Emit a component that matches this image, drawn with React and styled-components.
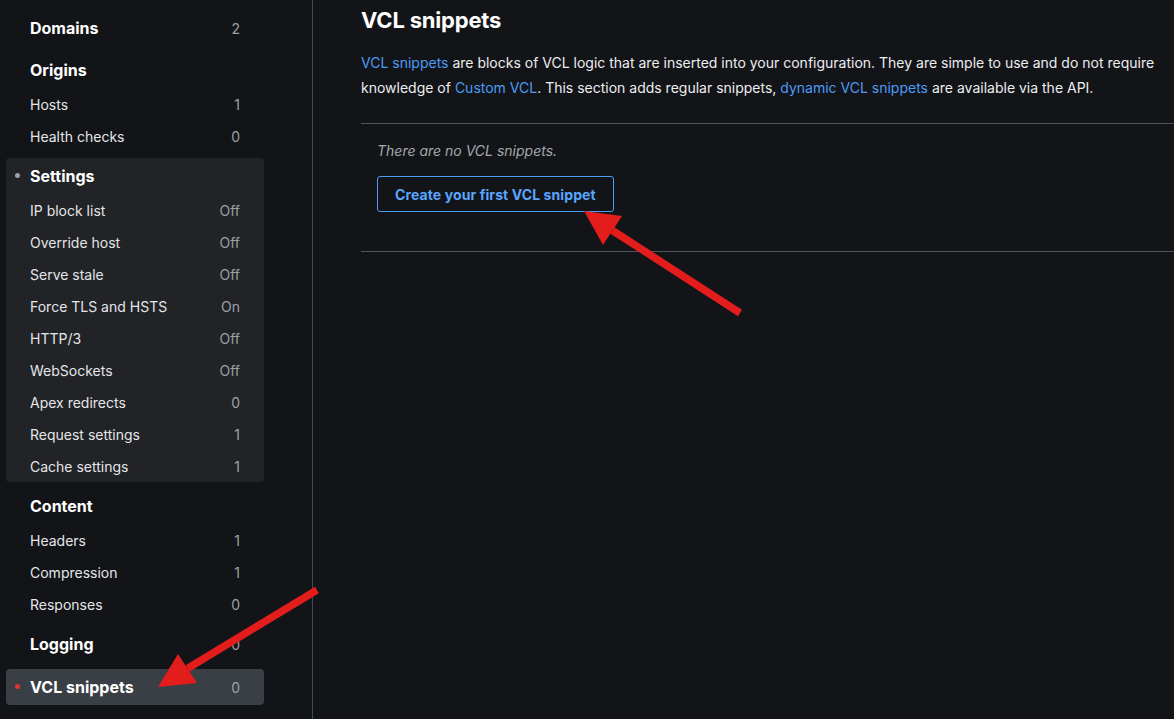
import React from "react";
import styled, { createGlobalStyle } from "styled-components";

const Global = createGlobalStyle`
  html, body { margin: 0; padding: 0; background: #131418; }
  body { font-family: Inter, "Noto Sans", sans-serif; color: #e6e8eb; -webkit-font-smoothing: antialiased; }
  * { box-sizing: border-box; }
`;

const Page = styled.div`
  position: relative;
  display: flex;
  width: 1174px;
  height: 719px;
  overflow: hidden;
  background: #131418;
`;

const Sidebar = styled.nav`
  width: 313px;
  flex: none;
  padding: 10px 48px 0 6px;
  border-right: 1px solid #454a52;
  display: flex;
  flex-direction: column;
  gap: 6px;
`;

const Group = styled.div`
  display: flex;
  flex-direction: column;
  border-radius: 4px;
  margin-top: ${(p) => (p.$active ? "1px" : "0")};
  background: ${(p) => (p.$active ? "#3a3f46" : p.$panel ? "#212327" : "transparent")};
`;

const Row = styled.div`
  position: relative;
  display: flex;
  align-items: center;
  justify-content: space-between;
  height: ${(p) => (p.$header ? "36px" : "32px")};
  padding: 0 24px;
  font-size: ${(p) => (p.$header ? "16px" : "14px")};
  font-weight: ${(p) => (p.$header ? 700 : 400)};
  color: ${(p) => (p.$header ? "#ffffff" : "#e4e6e9")};
`;

const Dot = styled.span`
  position: absolute;
  left: 9px;
  top: 50%;
  width: 5px;
  height: 5px;
  margin-top: -3px;
  border-radius: 50%;
  background: ${(p) => p.$color};
`;

const Count = styled.span`
  font-size: 14px;
  font-weight: 400;
  color: #9aa1a9;
`;

const Main = styled.main`
  flex: 1;
  padding: 6px 0 0 48px;
`;

const Title = styled.h1`
  margin: 0;
  font-size: 22px;
  line-height: 28px;
  font-weight: 700;
  color: #ffffff;
  letter-spacing: -0.2px;
`;

const Intro = styled.p`
  margin: 16px 0 0;
  padding-right: 8px;
  font-size: 14px;
  line-height: 25px;
  color: #eceef0;
`;

const Link = styled.a`
  color: #4b9cf5;
  text-decoration: none;
`;

const Section = styled.section`
  margin-top: 23px;
  border-top: 1px solid #50545b;
  border-bottom: 1px solid #50545b;
  padding: 17px 16px 39px;
`;

const Empty = styled.div`
  font-size: 14px;
  line-height: 20px;
  font-style: italic;
  color: #a3a8af;
`;

const Button = styled.button`
  margin-top: 15px;
  height: 36px;
  padding: 0 17px;
  border: 1px solid #4b9cf5;
  border-radius: 3px;
  background: transparent;
  color: #59a6ff;
  font-family: Inter, "Noto Sans", sans-serif;
  font-size: 14px;
  font-weight: 700;
  letter-spacing: 0.1px;
`;

const Overlay = styled.svg`
  position: absolute;
  left: 0;
  top: 0;
  pointer-events: none;
`;

const nav = [
  { header: ["Domains", "2"], items: [] },
  { header: ["Origins"], items: [["Hosts", "1"], ["Health checks", "0"]] },
  {
    header: ["Settings"],
    panel: true,
    dot: "#9aa0a6",
    items: [
      ["IP block list", "Off"],
      ["Override host", "Off"],
      ["Serve stale", "Off"],
      ["Force TLS and HSTS", "On"],
      ["HTTP/3", "Off"],
      ["WebSockets", "Off"],
      ["Apex redirects", "0"],
      ["Request settings", "1"],
      ["Cache settings", "1"],
    ],
  },
  { header: ["Content"], items: [["Headers", "1"], ["Compression", "1"], ["Responses", "0"]] },
  { header: ["Logging", "0"], items: [] },
  { header: ["VCL snippets", "0"], active: true, dot: "#e5322d", items: [] },
];

function Arrow({ tail, tip, b1, b2 }) {
  return (
    <g>
      <line x1={tail[0]} y1={tail[1]} x2={(b1[0] + b2[0]) / 2} y2={(b1[1] + b2[1]) / 2} stroke="#e31c1c" strokeWidth="7.5" />
      <polygon points={`${tip.join(",")} ${b1.join(",")} ${b2.join(",")}`} fill="#e31c1c" />
    </g>
  );
}

export default function App() {
  return (
    <Page>
      <Global />
      <Sidebar>
        {nav.map((g) => (
          <Group key={g.header[0]} $panel={g.panel} $active={g.active}>
            <Row $header>
              {g.dot && <Dot $color={g.dot} />}
              <span>{g.header[0]}</span>
              {g.header[1] && <Count>{g.header[1]}</Count>}
            </Row>
            {g.items.map(([label, val]) => (
              <Row key={label}>
                <span>{label}</span>
                <Count>{val}</Count>
              </Row>
            ))}
          </Group>
        ))}
      </Sidebar>
      <Main>
        <Title>VCL snippets</Title>
        <Intro>
          <Link>VCL snippets</Link> are blocks of VCL logic that are inserted into your configuration. They are simple to use and do not require knowledge of <Link>Custom VCL</Link>. This section adds regular snippets, <Link>dynamic VCL snippets</Link> are available via the API.
        </Intro>
        <Section>
          <Empty>There are no VCL snippets.</Empty>
          <Button>Create your first VCL snippet</Button>
        </Section>
      </Main>
      <Overlay width="1174" height="719" viewBox="0 0 1174 719">
        <Arrow tail={[740, 313]} tip={[584, 211]} b1={[622, 216]} b2={[603, 245]} />
        <Arrow tail={[317, 590]} tip={[158, 687]} b1={[178, 654]} b2={[197, 683]} />
      </Overlay>
    </Page>
  );
}
